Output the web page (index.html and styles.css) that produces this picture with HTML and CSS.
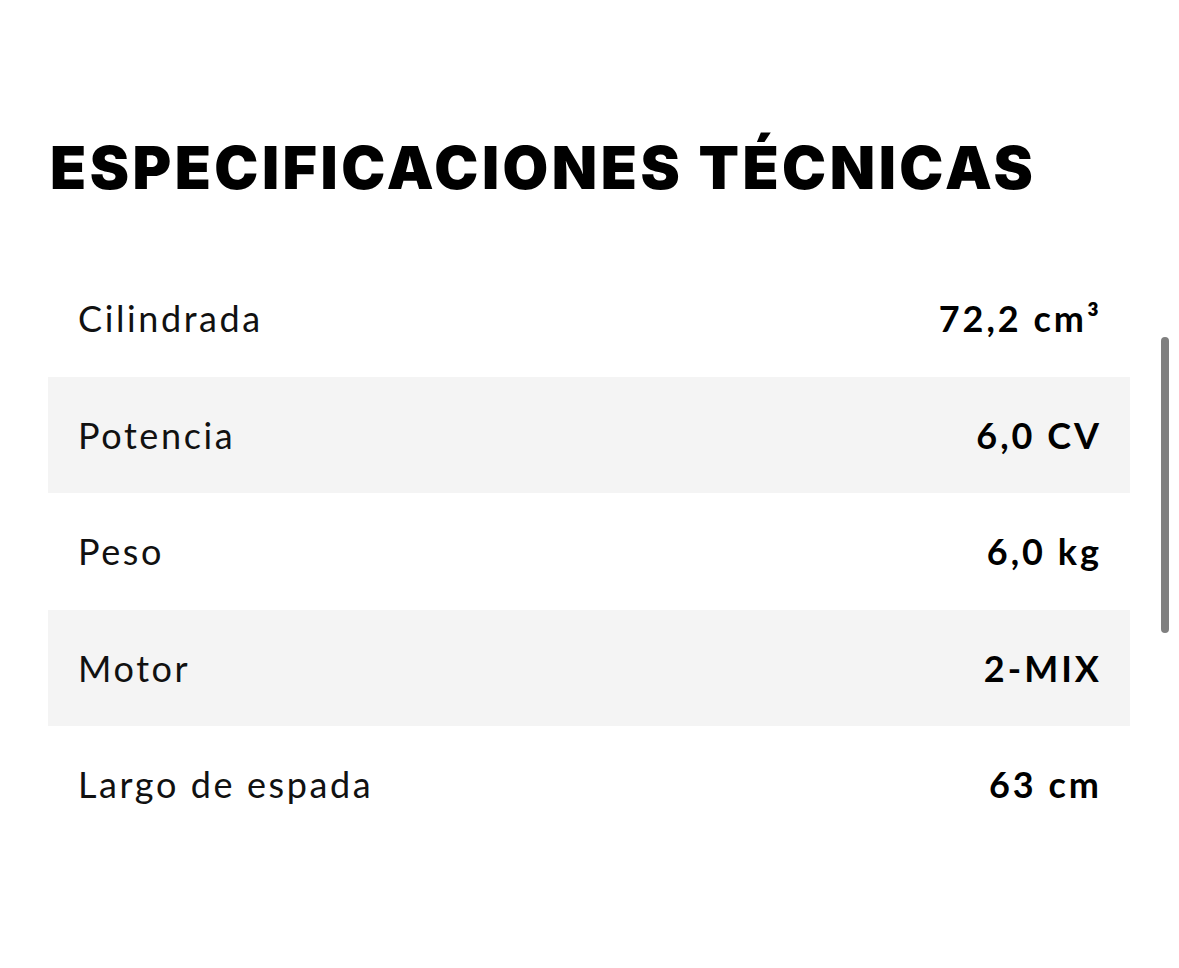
FILE: index.html
```html
<!DOCTYPE html>
<html lang="es">
<head>
<meta charset="utf-8">
<title>Especificaciones técnicas</title>
<link rel="stylesheet" href="styles.css">
</head>
<body>
<main class="page">
  <section class="specs">
    <h2 class="specs-title">ESPECIFICACIONES TÉCNICAS</h2>
    <div class="specs-table">
      <div class="row"><span class="label">Cilindrada</span><span class="value">72,2 cm³</span></div>
      <div class="row alt"><span class="label">Potencia</span><span class="value">6,0 CV</span></div>
      <div class="row"><span class="label">Peso</span><span class="value">6,0 kg</span></div>
      <div class="row alt"><span class="label">Motor</span><span class="value">2-MIX</span></div>
      <div class="row"><span class="label">Largo de espada</span><span class="value">63 cm</span></div>
    </div>
  </section>
  <div class="scrollbar"></div>
</main>
</body>
</html>
```
FILE: styles.css
```css
html, body {
  margin: 0;
  padding: 0;
  background: #ffffff;
}
body {
  font-family: "Lato", "Open Sans", sans-serif;
  color: #111111;
}
.page {
  position: relative;
  width: 1179px;
  height: 968px;
  overflow: hidden;
}
.specs {
  padding: 132px 49px 0 48px;
}
.specs-title {
  margin: 0 0 0 2px;
  font-family: "Inter", "Lato", sans-serif;
  font-weight: 900;
  font-size: 59px;
  line-height: 72px;
  letter-spacing: 3.5px;
  color: #000;
}
.specs-table {
  margin-top: 56px;
  display: flex;
  flex-direction: column;
}
.row {
  height: 116.5px;
  display: flex;
  align-items: center;
  justify-content: space-between;
  padding: 0 28px 0 30px;
}
.row.alt {
  background: #f4f4f4;
}
.label {
  font-size: 36px;
  font-weight: 400;
  letter-spacing: 2.6px;
  color: #111;
}
.value {
  font-size: 36px;
  font-weight: 700;
  letter-spacing: 3px;
  color: #000;
}
.scrollbar {
  position: absolute;
  left: 1161px;
  top: 337px;
  width: 8px;
  height: 296px;
  border-radius: 4px;
  background: #7f7f7f;
}
```
